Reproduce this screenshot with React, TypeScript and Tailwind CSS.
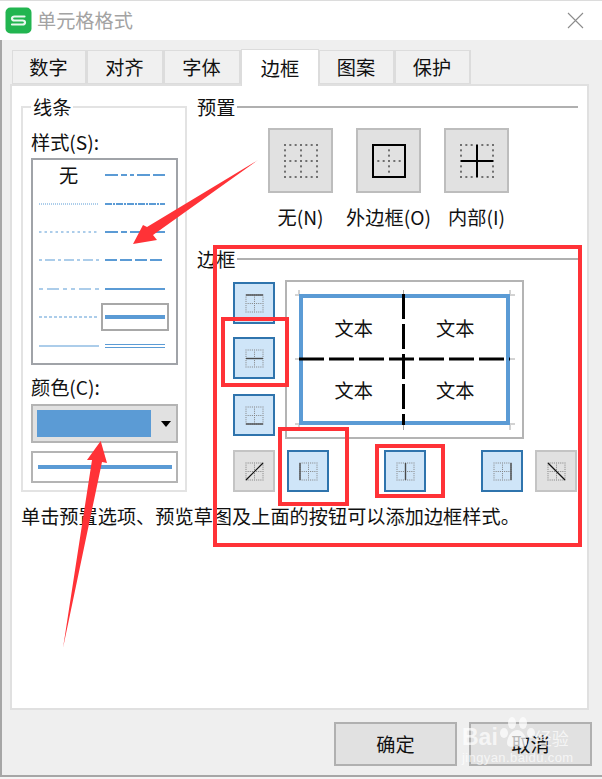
import React from "react";

const FONT = "font-['Noto_Sans_CJK_SC','Noto_Sans',sans-serif]";

function Dotted({ s, big }: { s: number; big: boolean }) {
  const n = big ? 6 : 8;
  const mid = n / 2;
  const step = s / n;
  const d = big ? 2 : 1;
  const dots: React.ReactElement[] = [];
  for (let i = 0; i <= n; i++) {
    for (let j = 0; j <= n; j++) {
      if (i === 0 || i === mid || i === n || j === 0 || j === mid || j === n) {
        dots.push(<rect key={`${i}-${j}`} x={i * step - d / 2} y={j * step - d / 2} width={d} height={d} fill={big ? "#707070" : "#808080"} />);
      }
    }
  }
  return <>{dots}</>;
}

type Kind = "none" | "outer" | "inner" | "top" | "mid" | "bottom" | "left" | "center" | "right" | "diagUp" | "diagDown";

function GridIcon({ size, kind }: { size: number; kind: Kind }) {
  const s = size;
  const big = size > 20;
  const sw = big ? 2 : 1.4;
  const c = big ? "#000000" : "#4a4a4a";
  return (
    <svg width={s + 2} height={s + 2} viewBox={`-1 -1 ${s + 2} ${s + 2}`}>
      <Dotted s={s} big={big} />
      {kind === "outer" && <rect x={0} y={0} width={s} height={s} fill="none" stroke={c} strokeWidth={sw} />}
      {kind === "inner" && <path d={`M0 ${s / 2}H${s}M${s / 2} 0V${s}`} stroke={c} strokeWidth={sw} />}
      {kind === "top" && <path d={`M0 0H${s}`} stroke={c} strokeWidth={sw} />}
      {kind === "mid" && <path d={`M0 ${s / 2}H${s}`} stroke={c} strokeWidth={sw} />}
      {kind === "bottom" && <path d={`M0 ${s}H${s}`} stroke={c} strokeWidth={sw} />}
      {kind === "left" && <path d={`M0 0V${s}`} stroke={c} strokeWidth={sw} />}
      {kind === "center" && <path d={`M${s / 2} 0V${s}`} stroke={c} strokeWidth={sw} />}
      {kind === "right" && <path d={`M${s} 0V${s}`} stroke={c} strokeWidth={sw} />}
      {kind === "diagUp" && <path d={`M0 ${s}L${s} 0`} stroke="#111" strokeWidth={1.2} />}
      {kind === "diagDown" && <path d={`M0 0L${s} ${s}`} stroke="#111" strokeWidth={1.2} />}
    </svg>
  );
}

function EdgeButton({ kind, on = true, className = "" }: { kind: Kind; on?: boolean; className?: string }) {
  return (
    <button
      className={`flex h-[42px] w-[42px] shrink-0 items-center justify-center border-2 ${
        on ? "border-[#2f74ad] bg-[#cfe5f8]" : "border-[#c4c4c4] bg-[#e1e1e1]"
      } ${className}`}
    >
      <GridIcon size={17} kind={kind} />
    </button>
  );
}

function Preset({ kind, label }: { kind: Kind; label: string }) {
  return (
    <div className="flex w-[65px] flex-col items-center">
      <button className="flex h-[65px] w-[65px] items-center justify-center border-2 border-[#bdbdbd] bg-[#e1e1e1]">
        <GridIcon size={32} kind={kind} />
      </button>
      <span className="mt-[12px] whitespace-nowrap leading-[24px]">{label}</span>
    </div>
  );
}

function StyleLine({ dash, width = 1.2, double }: { dash?: string; width?: number; double?: boolean }) {
  return (
    <svg width="60" height="8" viewBox="0 0 60 8" className="block">
      {double ? (
        <>
          <path d="M0 2.5H60" stroke="#5b9bd5" strokeWidth="1" />
          <path d="M0 5.5H60" stroke="#5b9bd5" strokeWidth="1" />
        </>
      ) : (
        <path d="M0 4H60" stroke="#5b9bd5" strokeWidth={width} strokeDasharray={dash} />
      )}
    </svg>
  );
}

function Row({ left, right, selected }: { left: React.ReactNode; right: React.ReactNode; selected?: boolean }) {
  return (
    <div className="flex h-[28.4px] items-center">
      <div className="flex w-[68px] justify-center pl-[3px]">{left}</div>
      <div className={`flex h-[28px] w-[68px] items-center justify-center border-2 ${selected ? "border-[#a8a8a8]" : "border-transparent"}`}>{right}</div>
    </div>
  );
}

function Heading({ children }: { children: React.ReactNode }) {
  return (
    <div className="flex h-[24px] items-center">
      <span className="leading-[24px]">{children}</span>
      <div className="ml-[2px] h-[2px] flex-1 bg-[#b0b0b0]" />
    </div>
  );
}

const TABS_LEFT = [
  { t: "数字", w: "w-[75px]" },
  { t: "对齐", w: "w-[77px]" },
  { t: "字体", w: "w-[77px]" },
];
const TABS_RIGHT = [
  { t: "图案", w: "w-[76px]" },
  { t: "保护", w: "w-[76px]" },
];

export default function App() {
  return (
    <div className={`${FONT} relative flex h-[779px] w-[602px] flex-col overflow-hidden bg-[#f4f4f4] text-[19.2px] text-[#111]`}>
      <div className="flex h-[40px] shrink-0 items-center border-t border-[#dcdcdc] bg-white pl-[5px] pr-[18px]">
        <svg width="27" height="27" viewBox="0 0 27 27">
          <rect x="0.5" y="0.5" width="26" height="26" rx="5" fill="#22b550" />
          <path d="M19.5 9.5H9.500Q7 9.500 7 11.500T9.500 13.500H17.500Q20 13.500 20 15.500T17.500 17.500H7" fill="none" stroke="#e8f8ee" strokeWidth="2.2" strokeLinecap="round" />
        </svg>
        <span className="ml-[5px] flex-1 text-[#a3a3a3]">单元格格式</span>
        <svg width="17" height="17" viewBox="0 0 17 17">
          <path d="M1 1L16 16M16 1L1 16" stroke="#8c8c8c" strokeWidth="1.1" />
        </svg>
      </div>

      <div className="mb-[2px] flex flex-1 flex-col border-b-2 border-l-2 border-[#a6a6a6] bg-[#efefef] pl-[9px]">
        <div className="mt-[10px] flex h-[34px] items-end pl-[1px]">
          {TABS_LEFT.map(({ t, w }) => (
            <div key={t} className={`flex h-[34px] ${w} items-center justify-center border border-r-2 border-[#dcdcdc] bg-[#f0f0f0] pr-[1px]`}>{t}</div>
          ))}
          <div className="z-10 -mb-[2px] flex h-[37px] w-[78px] items-center justify-center border border-b-0 border-[#dcdcdc] bg-white">边框</div>
          {TABS_RIGHT.map(({ t, w }) => (
            <div key={t} className={`flex h-[34px] ${w} items-center justify-center border border-r-2 border-[#dcdcdc] bg-[#f0f0f0] pr-[1px]`}>{t}</div>
          ))}
        </div>

        <div className="-ml-[1px] h-[626px] w-[579px] border-2 border-[#e0e0e0] bg-white pl-[9px] pt-[9px]">
          <div className="flex">
            <fieldset className="h-[397px] w-[166px] border-2 border-[#e3e3e3] pl-[8px]">
              <legend className="h-[24px] px-[2px] leading-[24px]">线条</legend>
              <div className="mt-[11px] h-[25px] leading-[25px]">样式(S):</div>
              <div className="mt-[3px] h-[207px] w-[147px] border-2 border-[#a0a3a8] bg-white pt-[1px]">
                <Row left={<span className="leading-[24px]">无</span>} right={<StyleLine width={2} dash="13 3 6 3 4 3 13 3" />} />
                <Row left={<StyleLine dash="1 1" />} right={<StyleLine width={2} dash="7 1 2 1" />} />
                <Row left={<StyleLine dash="2.500 3" />} right={<StyleLine width={2} dash="13 3 6 3" />} />
                <Row left={<StyleLine dash="3 3 10 3" />} right={<StyleLine width={2} dash="12 3" />} />
                <Row left={<StyleLine dash="4 4 12 4 4 4" />} right={<StyleLine width={2} />} />
                <Row left={<StyleLine dash="3 2" />} right={<StyleLine width={4} />} selected />
                <Row left={<StyleLine />} right={<StyleLine double />} />
              </div>
              <div className="mt-[9px] h-[26px] leading-[26px]">颜色(C):</div>
              <div className="mt-[4px] flex h-[39px] w-[147px] items-center border-2 border-[#b4b4b4] bg-[#e1e1e1] pl-[4px]">
                <div className="h-[27px] w-[114px] bg-[#5b9bd5]" />
                <svg width="10" height="6" viewBox="0 0 10 6" className="ml-[10px]">
                  <path d="M0 0H10L5 6Z" fill="#000" />
                </svg>
              </div>
              <div className="mt-[8px] flex h-[32px] w-[147px] items-center justify-center border-2 border-[#b4b4b4] bg-white">
                <div className="h-[4px] w-[134px] bg-[#5b9bd5]" />
              </div>
            </fieldset>

            <div className="ml-[10px] w-[381px]">
              <Heading>预置</Heading>
              <div className="ml-[71px] mt-[9px] flex gap-[23px]">
                <Preset kind="none" label="无(N)" />
                <Preset kind="outer" label="外边框(O)" />
                <Preset kind="inner" label="内部(I)" />
              </div>
              <div className="mt-[18px]">
                <Heading>边框</Heading>
              </div>
              <div className="ml-[36px] mt-[9px] flex">
                <div className="flex flex-col pt-[2px]">
                  <EdgeButton kind="top" />
                  <EdgeButton kind="mid" className="mt-[13px]" />
                  <EdgeButton kind="bottom" className="mt-[15px]" />
                </div>
                <div className="relative ml-[10px] h-[159px] w-[239px] border-2 border-[#b4b4b4] p-[12px]">
                  <div className="grid h-[131px] w-[211px] grid-cols-2 grid-rows-2 border-4 border-[#5b9bd5]">
                    {["文本", "文本", "文本", "文本"].map((t, i) => (
                      <div key={i} className="flex items-center justify-center">{t}</div>
                    ))}
                  </div>
                  <svg className="pointer-events-none absolute -left-[2px] -top-[2px]" width="239" height="159" viewBox="0 0 239 159">
                    <path d="M14 79H225" stroke="#000" strokeWidth="3" strokeDasharray="25 5" />
                    <path d="M118.500 14V145" stroke="#000" strokeWidth="3" strokeDasharray="25 5" />
                    <path d="M10 15H14M14 10V14M225 15H230M225 10V14M10 79H14M225 79H230M10 144H14M225 144H230M14 145V150M225 145V150M118.500 10V14M118.500 145V150" stroke="#a6a6a6" strokeWidth="1" />
                  </svg>
                </div>
              </div>
              <div className="ml-[36px] mt-[11px] flex">
                <EdgeButton kind="diagUp" on={false} />
                <EdgeButton kind="left" className="ml-[12px]" />
                <EdgeButton kind="center" className="ml-[55px]" />
                <EdgeButton kind="right" className="ml-[55px]" />
                <EdgeButton kind="diagDown" on={false} className="ml-[12px]" />
              </div>
            </div>
          </div>
          <p className="mt-[12px] whitespace-nowrap leading-[24px]">单击预置选项、预览草图及上面的按钮可以添加边框样式。</p>
        </div>

        <div className="mt-[12px] flex justify-end pr-[10px]">
          <button className="flex h-[44px] w-[123px] items-center justify-center border-2 border-[#b0b0b0] bg-[#e1e1e1]">确定</button>
          <button className="ml-[12px] flex h-[44px] w-[123px] items-center justify-center border-2 border-[#b0b0b0] bg-[#e1e1e1]">取消</button>
        </div>
      </div>

      {/* annotations lying over the dialog */}
      <div className="pointer-events-none absolute left-[213px] top-[245px] h-[302px] w-[369px] border-4 border-[#ff3237]" />
      <div className="pointer-events-none absolute left-[221px] top-[317px] h-[70px] w-[68px] border-4 border-[#ff3237]" />
      <div className="pointer-events-none absolute left-[278px] top-[427px] h-[79px] w-[71px] border-4 border-[#ff3237]" />
      <div className="pointer-events-none absolute left-[375px] top-[444px] h-[54px] w-[70px] border-4 border-[#ff3237]" />
      <svg className="pointer-events-none absolute left-0 top-0" width="602" height="779" viewBox="0 0 602 779">
        <polygon points="258,160 147,227 143,225 133,244 157,240 153,235" fill="#ff3237" />
        <polygon points="63,648 92,460 87,460 100.700,441 107,463 102,462" fill="#ff3237" />
      </svg>

      {/* watermark */}
      <div className="pointer-events-none absolute left-[462px] top-[714px] whitespace-nowrap font-['Liberation_Sans',sans-serif] text-white/70">
        <div className="flex h-[36px] items-end">
          <span className="text-[23px] font-bold leading-[26px]">Bai</span>
          <svg width="36" height="34" viewBox="0 0 36 34" fill="currentColor" className="ml-[1px]">
            <ellipse cx="13" cy="7" rx="4" ry="6" />
            <ellipse cx="24" cy="7" rx="4" ry="6" />
            <ellipse cx="5" cy="17" rx="4" ry="5" />
            <ellipse cx="32" cy="17" rx="4" ry="5" />
            <path d="M18 14C12 14 8 22 8 27C8 32 14 31 18 30C22 31 28 32 28 27C28 22 24 14 18 14Z" />
          </svg>
          <span className={`${FONT} text-[17px] leading-[24px]`}>经验</span>
        </div>
        <div className="mt-[1px] text-[13px] leading-[14px] tracking-[0.4px]">jingyan.baidu.com</div>
      </div>
    </div>
  );
}
